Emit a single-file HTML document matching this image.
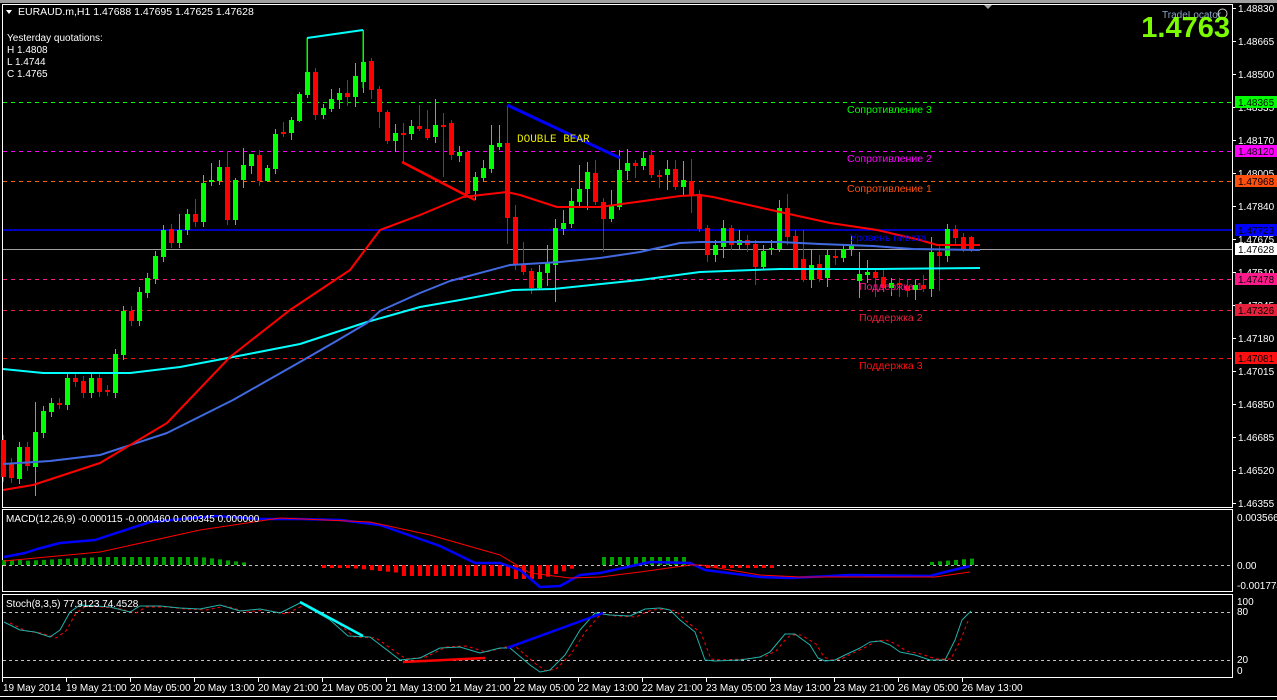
<!DOCTYPE html>
<html><head><meta charset="utf-8">
<style>
html,body{margin:0;padding:0;background:#000;width:1277px;height:700px;overflow:hidden}
svg{display:block;font-family:"Liberation Sans",sans-serif}
</style></head><body>
<svg id="s" width="1277" height="700" xmlns="http://www.w3.org/2000/svg">
<rect width="1277" height="700" fill="#000"/>
<rect x="0" y="0" width="1277" height="3" fill="#a0a0a0"/>
<polygon points="984,5 992,5 988,9" fill="#a0a0a0"/>
<g fill="none" stroke="#fff" stroke-width="1">
<rect x="2.5" y="4.5" width="1230" height="503"/>
<rect x="2.5" y="509.5" width="1230" height="82"/>
<rect x="2.5" y="594.5" width="1230" height="83"/>
<line x1="0" y1="696.5" x2="1277" y2="696.5"/>
</g>
<g stroke-width="1" stroke-dasharray="4,4">
<line x1="3" y1="102.5" x2="1232" y2="102.5" stroke="#00ff00"/>
<line x1="3" y1="151.5" x2="1232" y2="151.5" stroke="#ff00ff"/>
<line x1="3" y1="181.5" x2="1232" y2="181.5" stroke="#ff6010"/>
<line x1="3" y1="279.5" x2="1232" y2="279.5" stroke="#ff1a8c"/>
<line x1="3" y1="310.5" x2="1232" y2="310.5" stroke="#e8203c"/>
<line x1="3" y1="358.5" x2="1232" y2="358.5" stroke="#ff1010"/>
</g>
<line x1="3" y1="230" x2="1232" y2="230" stroke="#0000ff" stroke-width="1.5"/>
<line x1="3" y1="249.5" x2="1232" y2="249.5" stroke="#a0a0a0" stroke-width="1"/>
<g id="candles"></g>
<g id="mas" fill="none"></g>
<g font-size="10.5px">
<text x="847" y="113" fill="#00ff00">Сопротивление 3</text>
<text x="847" y="162" fill="#ff00ff">Сопротивление 2</text>
<text x="847" y="192" fill="#ff5010">Сопротивление 1</text>
<text x="850" y="241" fill="#0000ff">Уровень пивота</text>
<text x="859" y="290" fill="#ff1a8c">Поддержка 1</text>
<text x="859" y="321" fill="#e8203c">Поддержка 2</text>
<text x="859" y="369" fill="#ff1010">Поддержка 3</text>
</g>
<text x="517" y="142" fill="#e8e800" font-family="Liberation Mono,monospace" font-size="11px">DOUBLE BEAR</text>
<polygon points="6,10 12,10 9,14" fill="#fff"/>
<text x="18" y="15" fill="#fff" font-size="10.5px">EURAUD.m,H1  1.47688 1.47695 1.47625 1.47628</text>
<g fill="#fff" font-size="10px">
<text x="7" y="41">Yesterday quotations:</text>
<text x="7" y="53">H 1.4808</text>
<text x="7" y="65">L 1.4744</text>
<text x="7" y="77">C 1.4765</text>
</g>
<text x="1162" y="18" fill="#8aa4c8" font-size="10px">TradeLocator</text>
<circle cx="1222.5" cy="13.5" r="4.5" fill="none" stroke="#ccc" stroke-width="1"/>
<text x="1230" y="37" fill="#7cfc00" font-size="29px" font-weight="bold" text-anchor="end">1.4763</text>
<g fill="#fff" font-size="10px" id="axis">
<text x="1238" y="12">1.48830</text>
<text x="1238" y="45">1.48665</text>
<text x="1238" y="78">1.48500</text>
<text x="1238" y="111">1.48335</text>
<text x="1238" y="144">1.48170</text>
<text x="1238" y="177">1.48005</text>
<text x="1238" y="210">1.47840</text>
<text x="1238" y="243">1.47675</text>
<text x="1238" y="276">1.47510</text>
<text x="1238" y="309">1.47345</text>
<text x="1238" y="342">1.47180</text>
<text x="1238" y="375">1.47015</text>
<text x="1238" y="408">1.46850</text>
<text x="1238" y="441">1.46685</text>
<text x="1238" y="474">1.46520</text>
<text x="1238" y="507">1.46355</text>
</g>
<g font-size="10px">
<rect x="1235" y="96" width="42" height="12" fill="#00ff00"/><text x="1238" y="106" fill="#000">1.48365</text>
<rect x="1235" y="145" width="42" height="12" fill="#ff00ff"/><text x="1238" y="155" fill="#000">1.48120</text>
<rect x="1235" y="175" width="42" height="12" fill="#ff5010"/><text x="1238" y="185" fill="#000">1.47968</text>
<rect x="1235" y="224" width="42" height="12" fill="#0000ff"/><text x="1238" y="234" fill="#000">1.47723</text>
<rect x="1235" y="243" width="42" height="12" fill="#fff"/><text x="1238" y="253" fill="#000">1.47628</text>
<rect x="1235" y="273" width="42" height="12" fill="#ff1a8c"/><text x="1238" y="283" fill="#000">1.47478</text>
<rect x="1235" y="304" width="42" height="12" fill="#e8203c"/><text x="1238" y="314" fill="#000">1.47326</text>
<rect x="1235" y="352" width="42" height="12" fill="#ff1010"/><text x="1238" y="362" fill="#000">1.47081</text>
</g>
<line x1="3" y1="565.5" x2="1232" y2="565.5" stroke="#c0c0c0" stroke-dasharray="3,3"/>
<g id="macd" fill="none"></g>
<text x="6" y="522" fill="#fff" font-size="10px">MACD(12,26,9) -0.000115 -0.000460 0.000345 0.000000</text>
<g fill="#fff" font-size="10px">
<text x="1237" y="521">0.003566</text>
<text x="1237" y="569">0.00</text>
<text x="1237" y="589">-0.001774</text>
</g>
<line x1="3" y1="612.5" x2="1232" y2="612.5" stroke="#c0c0c0" stroke-dasharray="3,3"/>
<line x1="3" y1="660.5" x2="1232" y2="660.5" stroke="#c0c0c0" stroke-dasharray="3,3"/>
<g id="stoch" fill="none"></g>
<text x="6" y="607" fill="#fff" font-size="10px">Stoch(8,3,5) 77.9123 74.4528</text>
<g fill="#fff" font-size="10px">
<text x="1237" y="605">100</text>
<text x="1237" y="615">80</text>
<text x="1237" y="663">20</text>
<text x="1237" y="674">0</text>
</g>
<g fill="#fff" font-size="10px" id="time">
<text x="3" y="691">19 May 2014</text>
<text x="66" y="691">19 May 21:00</text>
<text x="130" y="691">20 May 05:00</text>
<text x="194" y="691">20 May 13:00</text>
<text x="258" y="691">20 May 21:00</text>
<text x="322" y="691">21 May 05:00</text>
<text x="386" y="691">21 May 13:00</text>
<text x="450" y="691">21 May 21:00</text>
<text x="514" y="691">22 May 05:00</text>
<text x="578" y="691">22 May 13:00</text>
<text x="642" y="691">22 May 21:00</text>
<text x="706" y="691">23 May 05:00</text>
<text x="770" y="691">23 May 13:00</text>
<text x="834" y="691">23 May 21:00</text>
<text x="898" y="691">26 May 05:00</text>
<text x="962" y="691">26 May 13:00</text>
</g>
</svg>
<script>
var NS="http://www.w3.org/2000/svg";
function el(p,t,a){var e=document.createElementNS(NS,t);for(var k in a)e.setAttribute(k,a[k]);p.appendChild(e);return e;}
var C=[[3,440,477],[11,463,478],[19,479,447],[27,447,466],[35,467,432,402,496],[43,433,411],[51,412,403],[59,403,404],[67,405,378],[75,378,382],[83,381,393],[91,393,378],[99,378,392],[107,390,391],[115,393,354],[123,355,311],[131,311,321],[139,321,292],[147,293,278],[155,279,256],[163,257,230],[171,229,243],[179,243,230,214],[187,230,214],[195,214,222,199],[203,222,183,175],[211,182,180,163,186],[219,181,167,160,185],[227,167,220,151],[235,220,180,178],[243,180,165,148,188],[251,166,154,154,174],[259,155,181],[267,181,168,165,182],[275,169,134,129],[283,132,133,122,137],[291,133,120,117,140],[299,121,94,92,122],[307,95,72,37,98],[315,72,115,68],[323,115,108,104,119],[331,109,99,89,112],[339,100,93,88,109],[347,93,97,80,106],[355,97,76,63,107],[363,82,62,30,93],[371,61,90,58,99],[379,89,112,86,128],[387,112,141,110,144],[395,141,133,124,152],[403,133,134,123,163],[411,134,126,120,140],[419,126,129,105,131],[427,129,138,110,140],[435,137,125,99,143],[443,125,126,113,177],[451,123,155,120,160],[459,156,152,146,162],[467,152,194,150,196],[475,191,177,172,200],[483,178,168,160,182],[491,169,145,125,173],[499,147,143,125,150],[507,143,218,105,244],[515,217,265,205,270],[523,265,272,242,275],[531,271,288,268,294],[539,288,272,265,290],[547,273,262,245,286],[555,265,228,219,302],[563,229,223,210,235],[571,224,201,188,228],[579,202,189,165,208],[587,189,172,162,210],[595,173,202,160,205],[603,202,219,198,252],[611,219,205,190,222],[619,207,170,150,210],[627,171,163,149,180],[635,163,166,160,178],[643,166,158,152,170],[651,155,175,150,178],[659,175,177,170,188],[667,175,169,160,190],[675,169,187,160,190],[683,187,180,161,195],[691,181,196,159,213],[699,194,229,190,232],[707,228,255,225,262],[715,255,245,240,262],[723,247,228,220,258],[731,228,245,225,250],[739,245,240,230,250],[747,240,245,235,252],[755,244,267,240,285],[763,267,251,245,270],[771,249,248,240,255],[779,249,208,200,252],[787,208,237,194,245],[795,236,268,230,270],[803,259,280,230,282],[811,280,265,250,288],[819,264,279,255,282],[827,278,255,250,287],[835,256,258,250,265],[843,258,249,244,262],[851,249,246,236,256],[859,281,274,252,298],[867,275,272,260,283],[875,272,278,269,297],[883,277,288,270,292],[891,288,283,278,296],[899,283,284,278,297],[907,286,291,280,297],[915,290,285,280,300],[923,285,289,275,292],[931,289,252,237,297],[939,252,256,244,291],[947,256,229,224,262],[955,229,238,225,245],[963,237,250,233,252],[971,237,250,236,252]];
var g=document.getElementById("candles");
C.forEach(function(c){var x=c[0],o=c[1],cl=c[2];var top=Math.min(o,cl),bot=Math.max(o,cl);var h=c[3]||top-5,l=c[4]||bot+5;var col=cl<o?"#00ff00":"#ff0000";
el(g,"line",{x1:x+.5,x2:x+.5,y1:h,y2:l,stroke:col,"stroke-width":1});
el(g,"rect",{x:x-2,y:top,width:5,height:Math.max(2,bot-top),fill:col});});
function pl(p,pts,col,w,dash){var d=pts.map(function(q,i){return(i?"L":"M")+q[0]+","+q[1];}).join("");var a={d:d,stroke:col,"stroke-width":w,fill:"none","stroke-linejoin":"round"};if(dash)a["stroke-dasharray"]=dash;el(p,"path",a);}
var m=document.getElementById("mas");
pl(m,[[3,369],[43,373],[130,373],[180,367],[233,357],[300,344],[367,322],[420,307],[460,300],[513,290],[553,289],[640,280],[700,272],[780,269],[880,269],[980,268]],"#00ffff",2);
pl(m,[[3,464],[50,461],[100,455],[167,433],[233,400],[300,362],[333,343],[367,323],[380,311],[420,293],[450,281],[510,265],[560,262],[600,258],[640,252],[680,243],[700,242],[780,242],[820,244],[873,246],[913,249],[980,250]],"#4169e1",2);
pl(m,[[3,490],[33,485],[100,463],[167,423],[230,357],[290,310],[350,270],[380,230],[420,215],[463,197],[507,192],[520,195],[557,207],[600,207],[680,196],[700,195],[713,197],[780,212],[830,223],[877,230],[920,240],[937,245],[980,245]],"#ff0000",2);
pl(m,[[307,38],[307,75]],"#00ff00",1);pl(m,[[363,30],[363,88]],"#00ff00",1);
pl(m,[[307,38],[363,30]],"#00ffff",2);
pl(m,[[402,162],[475,200]],"#ff0000",2.5);
pl(m,[[507,105],[620,158]],"#0000ff",3);
var mc=document.getElementById("macd");
for(var x=3;x<=971;x+=8){var v=0;
if(x<=250){v=x<20?-5:x<100?-4-(x-20)/20:x<200?-8:-8+(x-200)/8;}
else if(x>=320&&x<=575){v=x<350?3:x<400?3+(x-350)/10:x<510?11:x<540?14:14-(x-540)/3;}
else if(x>=600&&x<=690){v=-8;}
else if(x>=705&&x<=775){v=3;}
else if(x>=930){v=-3-(x-930)/12;}
else v=0;
if(v<0)el(mc,"rect",{x:x-1,y:565+v,width:4,height:-v,fill:"#00a000"});
else if(v>0)el(mc,"rect",{x:x-1,y:565,width:4,height:v,fill:"#ff0000"});}
pl(mc,[[4,557],[25,553],[37,549],[60,543],[95,540],[110,535],[150,522],[215,516],[260,519],[300,519],[340,520],[380,525],[400,532],[440,546],[475,563],[500,563],[520,570],[540,587],[560,586],[580,575],[600,573],[650,562],[690,563],[705,570],[760,577],[790,578],[850,575],[930,576],[945,572],[970,566]],"#0000ff",2.5);
pl(mc,[[4,561],[100,552],[200,530],[280,518],[370,522],[430,535],[500,555],[530,573],[570,578],[600,577],[640,572],[690,565],[700,565],[760,575],[800,577],[935,577],[970,572]],"#ff0000",1);
var st=document.getElementById("stoch");
var K=[[4,622],[20,630],[35,632],[50,637],[60,630],[70,612],[80,605],[110,607],[130,612],[140,606],[160,606],[180,608],[200,609],[220,605],[240,611],[260,609],[280,613],[300,603],[330,620],[348,636],[370,637],[400,660],[420,658],[440,648],[460,647],[480,653],[500,648],[510,648],[530,665],[540,672],[550,670],[565,655],[580,630],[595,613],[610,615],[630,616],[645,609],[660,608],[670,610],[680,620],[695,632],[705,660],[715,661],[740,660],[760,657],[770,652],[780,640],[785,634],[795,634],[810,645],[818,658],[825,661],[835,660],[845,655],[860,648],[870,642],[880,641],[890,645],[900,652],[915,655],[930,660],[945,660],[955,640],[962,620],[971,611]];
pl(st,K.map(function(q){return[q[0]+6,q[1]+(q[1]<640?1:-1)]}).filter(function(q){return q[0]<=972}),"#ff0000",1,"3,3");
pl(st,K,"#20b2aa",1);
pl(st,[[300,602],[363,636]],"#00ffff",2.5);
pl(st,[[403,662],[485,658]],"#ff0000",2.5);
pl(st,[[507,648],[603,613]],"#0000ff",2.5);
var tm=document.getElementById("time");
for(var i=0;i<16;i++){var tx=2+i*64;el(tm,"line",{x1:tx+.5,x2:tx+.5,y1:678,y2:682,stroke:"#fff"});}
var ax=document.getElementById("axis");
for(var j=0;j<16;j++){el(ax,"line",{x1:1233,x2:1236,y1:8.5+j*33,y2:8.5+j*33,stroke:"#fff"});}
</script>
</body></html>
